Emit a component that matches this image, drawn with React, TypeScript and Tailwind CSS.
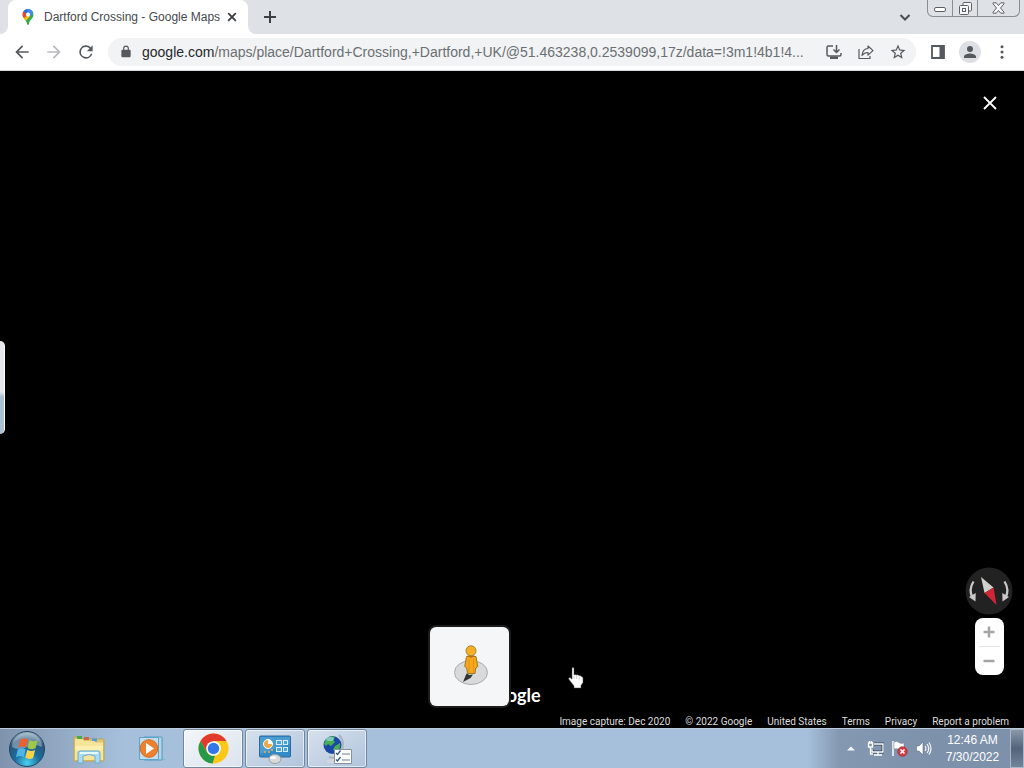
import type { ReactNode } from "react";

type IconProps = { children: ReactNode; size?: string };

function Icon({ children, size = "size-5" }: IconProps) {
  return (
    <svg viewBox="0 0 24 24" className={`${size} shrink-0 fill-current`} aria-hidden="true">
      {children}
    </svg>
  );
}

function ToolButton({ label, color = "text-[#55595d]", children }: { label: string; color?: string; children: ReactNode }) {
  return (
    <button aria-label={label} className={`flex size-8 shrink-0 items-center justify-center ${color}`}>
      {children}
    </button>
  );
}

function MapsPin() {
  return (
    <svg viewBox="0 0 16 20" className="h-4 w-4 shrink-0" aria-hidden="true">
      <defs>
        <clipPath id="pin">
          <path d="M8 0a7 7 0 0 1 7 7c0 4.500-4.800 6.500-5.800 11.500-.2 1-.6 1.500-1.200 1.500s-1-.5-1.200-1.500C5.800 13.500 1 11.500 1 7a7 7 0 0 1 7-7z" />
        </clipPath>
      </defs>
      <g clipPath="url(#pin)">
        <path fill="#34a853" d="M0 0h16v20H0z" />
        <path fill="#fbbc04" d="M0 12 9 3l2 6-8 8z" />
        <path fill="#ea4335" d="M0 0h6l2 7-4 4-4-2z" />
        <path fill="#1a73e8" d="M5 0h4L8 7 2.500 3z" />
        <path fill="#4285f4" d="M7 0h9v4L9 10 8 6z" />
      </g>
      <circle cx="8" cy="7" r="2.600" fill="#fff" />
    </svg>
  );
}

function TabStrip() {
  return (
    <div className="flex h-[34px] shrink-0 bg-[#dee1e6]">
      <div className="flex w-2 items-end bg-white">
        <div className="h-full w-full rounded-br-lg bg-[#dee1e6]" />
      </div>
      <div className="flex w-60 items-center rounded-t-lg bg-white pl-3 pr-2">
        <MapsPin />
        <span className="ml-2 flex-1 whitespace-nowrap font-['Liberation_Sans',Arial,sans-serif] text-[12px] text-[#45494d]">
          Dartford Crossing - Google Maps
        </span>
        <button aria-label="Close tab" className="flex size-4 items-center justify-center text-[#3c4043]">
          <svg viewBox="0 0 16 16" className="size-4" fill="none" stroke="currentColor" strokeWidth="1.900">
            <path d="m4.200 4.200 7.600 7.600m0-7.600-7.600 7.600" />
          </svg>
        </button>
      </div>
      <div className="flex w-2 bg-white">
        <div className="h-full w-full rounded-bl-lg bg-[#dee1e6]" />
      </div>
      <button aria-label="New tab" className="flex w-7 items-center justify-center text-[#3c4043]">
        <svg viewBox="0 0 16 16" className="size-4" fill="none" stroke="currentColor" strokeWidth="2">
          <path d="M8 2v12M2 8h12" />
        </svg>
      </button>
      <div className="flex-1" />
      <button aria-label="Search tabs" className="mr-2 flex w-7 items-center justify-center text-[#4a4d51]">
        <svg viewBox="0 0 16 16" className="size-4" fill="none" stroke="currentColor" strokeWidth="2">
          <path d="m3.500 6 4.500 4.500L12.500 6" />
        </svg>
      </button>
      <div className="mr-1 flex h-[17px] w-[93px] shrink-0 divide-x divide-[#8a8d92] rounded-b-md border border-t-0 border-[#8a8d92] text-[#5d6167]">
        <button aria-label="Minimize" className="flex w-[25px] items-end justify-center pb-1">
          <svg viewBox="0 0 12 5" className="h-[5px] w-3" fill="#fff" stroke="currentColor">
            <rect x=".5" y=".5" width="11" height="4" rx="1.500" />
          </svg>
        </button>
        <button aria-label="Restore" className="flex w-[25px] items-center justify-center">
          <svg viewBox="0 0 13 13" className="size-[13px]" fill="#f5f6f7" stroke="currentColor">
            <rect x="4" y=".5" width="8.500" height="8.500" rx="1" />
            <rect x=".5" y="3.500" width="9" height="9" rx="1" />
            <rect x="3.500" y="6.500" width="3" height="3" />
          </svg>
        </button>
        <button aria-label="Close window" className="flex flex-1 items-center justify-center">
          <svg viewBox="0 0 13 12" className="h-3 w-[13px]" fill="#f5f6f7" stroke="currentColor">
            <path d="M1 .8h3.200L6.500 3.500 8.800.8H12v1L8.500 6l3.500 4.200v1H8.800L6.500 8.500l-2.300 2.700H1v-1L4.500 6 1 1.800z" />
          </svg>
        </button>
      </div>
    </div>
  );
}

function Toolbar() {
  return (
    <div className="flex h-[37px] shrink-0 items-center border-b border-[#d5d7da] bg-white px-[6px]">
      <ToolButton label="Back">
        <Icon><path d="M20 11H7.800l5.600-5.600L12 4l-8 8 8 8 1.400-1.400L7.800 13H20z" /></Icon>
      </ToolButton>
      <ToolButton label="Forward" color="text-[#b8babd]">
        <Icon><path d="m12 4-1.400 1.400 5.600 5.600H4v2h12.200l-5.600 5.600L12 20l8-8z" /></Icon>
      </ToolButton>
      <ToolButton label="Reload">
        <Icon><path d="M17.650 6.350A8 8 0 1 0 19.730 14h-2.080A6 6 0 1 1 12 6c1.660 0 3.140.69 4.220 1.780L13 11h7V4z" /></Icon>
      </ToolButton>
      <div className="ml-1.5 flex h-7 min-w-0 flex-1 items-center rounded-full bg-[#f1f3f4] pl-[10px] pr-[2px]">
        <span className="flex w-4 justify-center text-[#55595d]">
          <Icon size="size-[14px]"><path d="M18 8h-1V6A5 5 0 0 0 7 6v2H6a2 2 0 0 0-2 2v9a2 2 0 0 0 2 2h12a2 2 0 0 0 2-2v-9a2 2 0 0 0-2-2zM9 6a3 3 0 0 1 6 0v2H9z" /></Icon>
        </span>
        <div className="ml-2 min-w-0 flex-1 overflow-hidden whitespace-nowrap font-['Liberation_Sans',Arial,sans-serif] text-[14px] leading-5 text-[#6b6f73]">
          <span className="text-[#25282b]">google.com</span>/maps/place/Dartford+Crossing,+Dartford,+UK/@51.463238,0.2539099,17z/data=!3m1!4b1!4...
        </div>
        <ToolButton label="Install Google Maps">
          <svg viewBox="0 0 18 18" className="size-[18px]" fill="none" stroke="currentColor" strokeWidth="1.500" aria-hidden="true">
            <path d="M8 3H3.500Q2 3 2 4.500v7Q2 13 3.500 13h11q1.500 0 1.500-1.500V10M11.500 2v7M8.500 6.500l3 3 3-3" />
            <path d="M5 13.500h8V16H5z" fill="currentColor" stroke="none" />
          </svg>
        </ToolButton>
        <ToolButton label="Share">
          <svg viewBox="0 0 18 18" className="size-[18px]" fill="none" stroke="currentColor" strokeWidth="1.200" strokeLinejoin="round" aria-hidden="true">
            <path d="M2 6v9.500h11V13M5 12.500C5.400 8 7.500 5.700 11 5.500V3l5 4.600-5 4.500V9.500c-2.800 0-4.600 1-6 3z" />
          </svg>
        </ToolButton>
        <ToolButton label="Bookmark this tab">
          <Icon size="size-[18px]"><path d="m22 9.240-7.190-.62L12 2 9.190 8.630 2 9.240l5.460 4.730L5.820 21 12 17.270 18.180 21l-1.630-7.030zM12 15.400l-3.760 2.270 1-4.280-3.320-2.880 4.380-.38L12 6.100l1.710 4.040 4.380.38-3.320 2.880 1 4.280z" /></Icon>
        </ToolButton>
      </div>
      <div className="flex pl-[6px]">
        <ToolButton label="Side panel">
          <svg viewBox="0 0 16 16" className="size-4" aria-hidden="true">
            <path d="M2 2h12v12H2z" fill="none" stroke="currentColor" strokeWidth="1.800" />
            <path d="M9.500 2H14v12H9.500z" fill="currentColor" />
          </svg>
        </ToolButton>
        <ToolButton label="Profile">
          <span className="flex size-[22px] items-center justify-center rounded-full bg-[#dce0e4]">
            <Icon size="size-[18px]"><path d="M12 12a4 4 0 1 0 0-8 4 4 0 0 0 0 8zm0 2c-2.670 0-8 1.340-8 4v2h16v-2c0-2.660-5.330-4-8-4z" /></Icon>
          </span>
        </ToolButton>
        <ToolButton label="Menu">
          <Icon size="size-[18px]">
            <circle cx="12" cy="5" r="2" /><circle cx="12" cy="12" r="2" /><circle cx="12" cy="19" r="2" />
          </Icon>
        </ToolButton>
      </div>
    </div>
  );
}

function Pegman() {
  return (
    <svg viewBox="0 0 40 46" className="h-[46px] w-10" aria-hidden="true">
      <ellipse cx="21" cy="28.500" rx="16.500" ry="12" fill="#d9dadb" stroke="#a8abad" />
      <path d="m13 38 3.500-8.500 3 1.500 3.500-.5-2.500 3.500z" fill="#333" />
      <path d="M16.500 12.500h9.500l1.800 10-2 1.500-.8 5.500h-7.500l-.8-5.500-2-1.500z" fill="#f5a81c" stroke="#96701d" strokeWidth=".9" strokeLinejoin="round" />
      <path d="M19 15v14M23.500 15v14" stroke="#e68c12" strokeWidth=".8" />
      <path d="m17 11.500 4 2.500 4-2.500z" fill="#c96812" />
      <circle cx="21" cy="6.800" r="5" fill="#f9af22" stroke="#a78339" />
    </svg>
  );
}

function Compass() {
  return (
    <button aria-label="Rotate the view" className="size-12 rounded-full">
      <svg viewBox="0 0 48 48" className="size-12" aria-hidden="true">
        <circle cx="24" cy="24" r="23.500" fill="#222" />
        <path d="M8.500 14.500C5 20 5 26 7.500 31M39.500 14.500c3.500 5.500 3.500 11.500 1 16.500" fill="none" stroke="#c9c9c9" strokeWidth="2.300" />
        <path d="m4 30 6.500 4.500.2-8.500zM44 30l-6.500 4.500-.2-8.500z" fill="#c9c9c9" />
        <path d="M16 10 28.500 20.500l-9 5.500z" fill="#d0d0cc" />
        <path d="M28.500 20.500 31.500 38l-12-12z" fill="#d32535" />
      </svg>
    </button>
  );
}

function StreetView() {
  const links = ["United States", "Terms", "Privacy", "Report a problem"];
  return (
    <main className="relative flex min-h-0 flex-1 flex-col justify-end overflow-hidden bg-black">
      <button aria-label="Close" className="absolute right-6 top-[22px] flex size-5 items-center justify-center text-white">
        <svg viewBox="0 0 20 20" className="size-5" fill="none" stroke="currentColor" strokeWidth="1.800">
          <path d="m4 4 12 12M16 4 4 16" />
        </svg>
      </button>
      <div className="absolute left-0 top-[270px] h-[93px] w-[5px] rounded-r-md border-r border-white bg-linear-to-b from-[#e4e7eb] from-55% to-[#a9bfd2] to-60%" />
      <div className="absolute bottom-[53px] right-[11px] flex w-12 flex-col items-center gap-[3px]">
        <Compass />
        <div className="flex h-[57px] w-[29px] flex-col divide-y divide-[#e3e3e3] rounded-lg bg-white px-1 text-[#a5a5a5]">
          <button aria-label="Zoom in" className="flex flex-1 items-center justify-center">
            <svg viewBox="0 0 12 12" className="size-3" stroke="currentColor" strokeWidth="2.500"><path d="M6 .5v11M.5 6h11" /></svg>
          </button>
          <button aria-label="Zoom out" className="flex flex-1 items-center justify-center">
            <svg viewBox="0 0 12 12" className="size-3" stroke="currentColor" strokeWidth="2.500"><path d="M.5 6h11" /></svg>
          </button>
        </div>
      </div>
      <div className="mb-[7px] flex justify-center">
        <span className="font-['Lato',sans-serif] text-[18px] font-bold leading-6 text-white">Google</span>
      </div>
      <button aria-label="Street View map" className="absolute bottom-[22px] left-[42%] flex size-[79px] items-center justify-center rounded-md bg-[#f4f6f7] ring-2 ring-[#1c1c1c]">
        <Pegman />
      </button>
      <svg viewBox="0 0 17 22" className="absolute bottom-[39px] left-[calc(50%+56px)] h-[22px] w-[17px]" aria-hidden="true">
        <path d="M4 1.500Q4 .5 5 .5t1 1V8q1-1 2.500 0 1.500-.7 2.500.5 1.700-.3 2.200 1 1.800-.1 1.800 1.800v4.200l-2 3V21H6v-2L1 12.500Q0 10.500 2 10.500l2 1.700z" fill="#fff" stroke="#444" strokeWidth=".5" />
        <path d="M6 9v3M8.700 9v3M11.300 9.500v3" stroke="#999" strokeWidth=".5" />
      </svg>
      <footer className="flex h-[14px] justify-end gap-[15px] whitespace-nowrap bg-black pr-[15px] font-['Roboto',sans-serif] text-[10px] leading-[15px] text-[#dedede]">
        <span>Image capture: Dec 2020</span>
        <span>© 2022 Google</span>
        {links.map((text) => (
          <a key={text} href="#">{text}</a>
        ))}
      </footer>
    </main>
  );
}

function StartOrb() {
  return (
    <svg viewBox="0 0 38 38" className="size-[38px]" aria-hidden="true">
      <defs>
        <radialGradient id="orb" cx=".5" cy=".9" r=".9">
          <stop offset="0" stopColor="#4cd0ef" />
          <stop offset=".4" stopColor="#1a6d9e" />
          <stop offset=".75" stopColor="#2d5378" />
          <stop offset="1" stopColor="#a4bccb" />
        </radialGradient>
      </defs>
      <circle cx="19" cy="19" r="17.500" fill="url(#orb)" stroke="#24455f" />
      <path d="M4 17a15 14 0 0 1 30 0q-7-4-15 0T4 17z" fill="#d6e5ed" opacity=".4" />
      <path d="M12 10q4-2.500 8-.5l-1.800 8q-4-2-8 .3z" fill="#ea6032" />
      <path d="M21.500 10q4 2.500 8 .3l-2 8q-4 2-7.800-.3z" fill="#9cc948" />
      <path d="M9.700 19.500q4-2.300 8-.3l-2 7.800q-4-2-7.700.2z" fill="#51b5e8" />
      <path d="M19.300 19.800q3.800 2.400 7.800.3l-2 7.900q-4 2-7.800-.4z" fill="#fbd34a" />
    </svg>
  );
}

function ExplorerIcon() {
  return (
    <svg viewBox="0 0 34 30" className="h-[30px] w-[34px]" aria-hidden="true">
      <path d="M2 3h7l2 2h19q2 0 2 2v19q0 1-1 1H3q-1 0-1-1z" fill="#e2c66b" stroke="#c1a452" />
      <path d="M5 2h5v3H5z" fill="#48a951" /><path d="M12 3h5v3h-5z" fill="#cf6544" /><path d="M20 4.500h5v3h-5z" fill="#4d9be0" />
      <path d="M4 5h6l2 2h10l2 1.500h7V26H3V6z" fill="#f5e49a" />
      <path d="M3 12h28v4H3z" fill="#fbefb2" />
      <path d="M6 29V19q0-2 2-2h18q2 0 2 2v10h-5v-7q-6-3-12 0v7z" fill="#a9daf0" stroke="#69aed1" />
      <path d="M8 19h18" stroke="#e5f7ff" strokeWidth="2" />
    </svg>
  );
}

function MediaIcon() {
  return (
    <svg viewBox="0 0 30 28" className="h-7 w-[30px]" aria-hidden="true">
      <path d="m11 2 15 1v20l3 2-18 1z" fill="#8db9d6" /><path d="M7 2h18v23H7z" fill="#b3d5e8" stroke="#5b9dc4" />
      <path d="M2.500 2.500h19v22h-19z" fill="#c3dbea" stroke="#5ba5cb" />
      <circle cx="12" cy="13.500" r="8.800" fill="#ee812f" stroke="#d46b22" />
      <path d="m9 8 8 5.500L9 19z" fill="#fff" />
    </svg>
  );
}

function ChromeIcon() {
  return (
    <svg viewBox="0 0 32 32" className="size-[31px]" aria-hidden="true">
      <circle cx="16" cy="16" r="15.500" fill="#fbc718" />
      <path d="M2.600 8.250a15.500 15.500 0 0 1 26.800 0H16l-6.500 11.500z" fill="#e23b2e" />
      <path d="M2.600 8.250 9.500 20q2.500 4 8 3.500L15 31.500A15.500 15.500 0 0 1 2.600 8.250z" fill="#269a4b" />
      <circle cx="16" cy="16" r="7.500" fill="#fff" /><circle cx="16" cy="16" r="5.900" fill="#3478e5" />
    </svg>
  );
}

function ControlPanelIcon() {
  return (
    <svg viewBox="0 0 34 30" className="h-[30px] w-[34px]" aria-hidden="true">
      <rect x="1.500" y="2" width="31" height="21" rx="1" fill="#338ac7" stroke="#2a6b9f" />
      <path d="M2 3h30v7L2 20z" fill="#5eabd9" opacity=".55" />
      <circle cx="10" cy="10" r="4.500" fill="#eba844" stroke="#fff" /><path d="M10 10V5.500a4.500 4.500 0 0 1 4.500 4.500z" fill="#fff" />
      <g fill="#4ba4d8" stroke="#d7edf8"><rect x="18.500" y="6.500" width="5" height="4" /><rect x="25.500" y="6.500" width="4" height="4" /><rect x="18.500" y="13.500" width="5" height="4" /><rect x="25.500" y="13.500" width="4" height="4" /></g>
      <g fill="#f1ad50"><circle cx="7" cy="18" r="1" /><circle cx="11" cy="18" r="1" /><circle cx="14" cy="16" r="1" /></g>
      <ellipse cx="17" cy="25" rx="6" ry="4.500" fill="#d7d9db" stroke="#9d9fa2" /><ellipse cx="15" cy="23.500" rx="3" ry="1.500" fill="#fff" />
    </svg>
  );
}

function NetworkIcon() {
  return (
    <svg viewBox="0 0 32 32" className="size-8" aria-hidden="true">
      <path d="M6 27h10v3H6zm3-6h4v7H9z" fill="#d2d7dc" />
      <path d="M18 2q8 9 0 20-4 4-10 2" fill="none" stroke="#aab4bd" strokeWidth="2" />
      <circle cx="11.500" cy="12" r="9" fill="#1949a4" />
      <path d="M5 6q5-4 9-2l-2 3 2 2-4 4-3-2-2 2-2-2zM14 13l5-3q1 5-3 8l-4-1z" fill="#48ae56" />
      <ellipse cx="9" cy="6" rx="4" ry="2" fill="#a5dff6" opacity=".6" />
      <path d="M13.500 16.500h17v14h-17z" fill="#fbfcfc" stroke="#8a9299" />
      <path d="m15 20 1.500 1.500 3-4M15 26.500l1.500 1.500 3-4" fill="none" stroke="#315b85" strokeWidth="1.300" />
      <path d="M21 21h8M21 27h8" stroke="#71808d" />
    </svg>
  );
}

function TaskWindow({ label, active = false, children }: { label: string; active?: boolean; children: ReactNode }) {
  return (
    <button
      aria-label={label}
      className={`flex h-[39px] w-[60px] items-center justify-center rounded-[3px] border border-[#72869d] inset-ring inset-ring-white/60 ${active ? "bg-linear-to-br from-[#f3f6fa] to-[#dbe3ee]" : "bg-linear-to-br from-[#d7e1ed] to-[#b0c4dc]"}`}
    >
      {children}
    </button>
  );
}

function Taskbar() {
  return (
    <div className="flex h-10 shrink-0 border-t border-[#bccbdc] bg-linear-to-r from-[#7f93ad] via-[#a6c0db] via-12% to-[#a6c0db]">
      <button aria-label="Start" className="flex w-[54px] items-center justify-center"><StartOrb /></button>
      <button aria-label="Windows Explorer" className="ml-1 flex w-[62px] items-center justify-center"><ExplorerIcon /></button>
      <button aria-label="Windows Media Player" className="flex w-[63px] items-center justify-center"><MediaIcon /></button>
      <div className="flex gap-[2px]">
        <TaskWindow label="Google Chrome" active><ChromeIcon /></TaskWindow>
        <TaskWindow label="Control Panel"><ControlPanelIcon /></TaskWindow>
        <TaskWindow label="Network settings"><NetworkIcon /></TaskWindow>
      </div>
      <div className="flex-1" />
      <div className="flex items-center bg-linear-to-r from-[#a6c0db] via-[#8598b2] via-25% to-[#7d91ab] pl-8">
        <button aria-label="Show hidden icons" className="flex w-6 justify-center">
          <svg viewBox="0 0 8 5" className="h-[5px] w-2"><path d="m0 4.500 4-4 4 4z" fill="#f4f7fa" /></svg>
        </button>
        <button aria-label="Network" className="flex w-6 justify-center">
          <svg viewBox="0 0 17 17" className="size-[17px]" fill="none" stroke="#fff" strokeWidth="1.300">
            <path d="M7 4h9v8H5V9" stroke="#34465b" strokeWidth="3" /><path d="M7 4h9v8H5V9M11 12v3M7 15h8M1.500 3v4h4V3zM2.500 3V1M4.500 3V1M3.500 7v7H6" />
          </svg>
        </button>
        <button aria-label="Action Center" className="flex w-6 justify-center">
          <svg viewBox="0 0 17 17" className="size-[17px]">
            <path d="M2 1v15" stroke="#fff" strokeWidth="1.500" /><path d="M3 2q3-1 5 .5t5 .5v7q-3 .8-5-.5T3 9z" fill="#fff" stroke="#687689" strokeWidth=".5" />
            <circle cx="11.500" cy="11.500" r="4.800" fill="#d43a43" stroke="#922c36" strokeWidth=".6" /><path d="m9.500 9.500 4 4m0-4-4 4" stroke="#fff" strokeWidth="1.600" />
          </svg>
        </button>
        <button aria-label="Volume" className="flex w-6 justify-center">
          <svg viewBox="0 0 17 17" className="size-[17px]" fill="none" stroke="#f4f7fa" strokeWidth="1.200">
            <path d="M1.500 6H4l4-4v13l-4-4H1.500z" fill="#fff" stroke="#536377" strokeWidth=".5" /><path d="M10 6q2 2.500 0 5M12 4q3.500 4.500 0 9M14 2.500q4 6 0 12" />
          </svg>
        </button>
      </div>
      <div className="flex w-[75px] flex-col justify-center bg-[#7d91ab] pt-px text-center font-['Liberation_Sans',Arial,sans-serif] text-[12px] leading-[17px] text-white">
        <span>12:46 AM</span>
        <span>7/30/2022</span>
      </div>
      <button aria-label="Show desktop" className="w-[14px] border border-[#a9b7c6] bg-linear-to-b from-[#8999aa] via-[#536579] via-50% to-[#71859a]" />
    </div>
  );
}

export default function App() {
  return (
    <div className="flex h-screen flex-col overflow-hidden">
      <TabStrip />
      <Toolbar />
      <StreetView />
      <Taskbar />
    </div>
  );
}
